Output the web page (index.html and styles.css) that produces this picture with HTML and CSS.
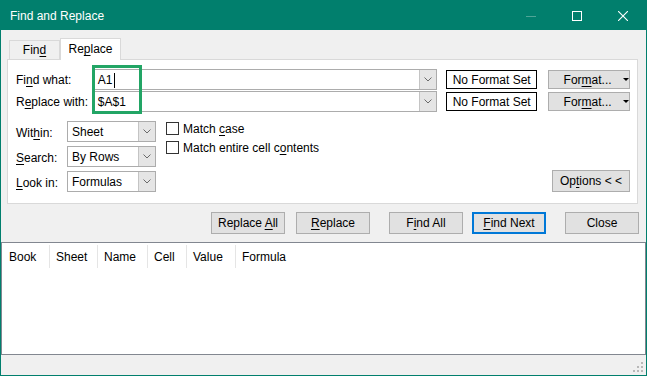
FILE: index.html
```html
<!DOCTYPE html>
<html lang="en">
<head>
  <meta charset="UTF-8">
  <title>Find and Replace</title>
  <link rel="stylesheet" href="styles.css">
</head>
<body>
  <div class="window">
    <div class="titlebar">
      <span class="title">Find and Replace</span>
      <div class="controls">
        <div class="ctl"><svg width="10" height="10"><path d="M0 5.5 H10" stroke="#4fa597"/></svg></div>
        <div class="ctl"><svg width="10" height="10"><rect x="0.5" y="0.5" width="9" height="9" fill="none" stroke="#fff"/></svg></div>
        <div class="ctl"><svg width="10" height="10"><path d="M0 0 L10 10 M10 0 L0 10" stroke="#fff" stroke-width="1.1"/></svg></div>
      </div>
    </div>

    <div class="main">
      <div class="tabs">
        <div class="tab">Fin<u>d</u></div>
        <div class="tab active">Re<u>p</u>lace</div>
      </div>

      <div class="panel">
        <div class="row">
          <label class="row-label">Fi<u>n</u>d what:</label>
          <div class="combo wide">
            <div class="combo-text">A1<span class="caret"></span></div>
            <div class="combo-arrow"><svg width="8" height="5"><path d="M0.5 0.5 L4 4 L7.5 0.5" fill="none" stroke="#6a6a6a"/></svg></div>
          </div>
          <div class="nofmt">No Format Set</div>
          <div class="btn fmt"><span>For<u>m</u>at...</span><span class="tri"></span></div>
        </div>
        <div class="row">
          <label class="row-label">R<u>e</u>place with:</label>
          <div class="combo wide">
            <div class="combo-text">$A$1</div>
            <div class="combo-arrow"><svg width="8" height="5"><path d="M0.5 0.5 L4 4 L7.5 0.5" fill="none" stroke="#6a6a6a"/></svg></div>
          </div>
          <div class="nofmt">No Format Set</div>
          <div class="btn fmt"><span>For<u>m</u>at...</span><span class="tri"></span></div>
        </div>

        <div class="lower">
          <div class="selects">
            <div class="sel-row">
              <label class="sel-label">Wit<u>h</u>in:</label>
              <div class="combo small">
                <div class="combo-text">Sheet</div>
                <div class="combo-arrow"><svg width="8" height="5"><path d="M0.5 0.5 L4 4 L7.5 0.5" fill="none" stroke="#6a6a6a"/></svg></div>
              </div>
            </div>
            <div class="sel-row">
              <label class="sel-label"><u>S</u>earch:</label>
              <div class="combo small">
                <div class="combo-text">By Rows</div>
                <div class="combo-arrow"><svg width="8" height="5"><path d="M0.5 0.5 L4 4 L7.5 0.5" fill="none" stroke="#6a6a6a"/></svg></div>
              </div>
            </div>
            <div class="sel-row">
              <label class="sel-label"><u>L</u>ook in:</label>
              <div class="combo small">
                <div class="combo-text">Formulas</div>
                <div class="combo-arrow"><svg width="8" height="5"><path d="M0.5 0.5 L4 4 L7.5 0.5" fill="none" stroke="#6a6a6a"/></svg></div>
              </div>
            </div>
          </div>

          <div class="checks">
            <div class="check"><span class="box"></span><span>Match <u>c</u>ase</span></div>
            <div class="check"><span class="box"></span><span>Match entire cell c<u>o</u>ntents</span></div>
          </div>

          <div class="btn options">Op<u>t</u>ions &lt; &lt;</div>
        </div>
      </div>

      <div class="actions">
        <div class="btn act">Replace <u>A</u>ll</div>
        <div class="btn act gap-s"><u>R</u>eplace</div>
        <div class="btn act gap-l">F<u>i</u>nd All</div>
        <div class="btn act gap-s primary"><u>F</u>ind Next</div>
        <div class="btn act gap-l">Close</div>
      </div>
    </div>

    <div class="results">
      <div class="res-head">
        <div class="col c-book">Book</div>
        <div class="col c-sheet">Sheet</div>
        <div class="col c-name">Name</div>
        <div class="col c-cell">Cell</div>
        <div class="col c-value">Value</div>
        <div class="col c-formula">Formula</div>
      </div>
    </div>

    <div class="statusbar">
      <svg class="grip" width="11" height="11">
        <rect x="8" y="0" width="2" height="2" fill="#b8b8b8"/>
        <rect x="4" y="4" width="2" height="2" fill="#b8b8b8"/>
        <rect x="8" y="4" width="2" height="2" fill="#b8b8b8"/>
        <rect x="0" y="8" width="2" height="2" fill="#b8b8b8"/>
        <rect x="4" y="8" width="2" height="2" fill="#b8b8b8"/>
        <rect x="8" y="8" width="2" height="2" fill="#b8b8b8"/>
      </svg>
    </div>

    <!-- highlight round the two search values -->
    <div class="highlight"></div>
  </div>
</body>
</html>
```

FILE: styles.css
```css
body {
  margin: 0;
  font-family: "Liberation Sans", Arial, sans-serif;
  font-size: 12px;
  color: #000;
}

u {
  text-decoration-thickness: 1px;
  text-underline-offset: 2px;
}

.window {
  position: relative;
  width: 647px;
  height: 376px;
  box-sizing: border-box;
  border: 1px solid #017f6d;
  border-top: 0;
  background: #f0f0f0;
  display: flex;
  flex-direction: column;
}

.titlebar {
  height: 30px;
  flex: none;
  background: #017f6d;
  color: #fff;
  display: flex;
  align-items: center;
  padding-left: 9px;
  padding-top: 1px;
  box-sizing: border-box;
}

.controls {
  margin-left: auto;
  display: flex;
}

.ctl {
  width: 46px;
  height: 29px;
  display: flex;
  align-items: center;
  justify-content: center;
}

.main {
  padding-top: 8px;
}

.tabs {
  display: flex;
  align-items: flex-end;
  height: 21px;
  padding-left: 8px;
}

.tab {
  width: 51px;
  height: 19px;
  box-sizing: border-box;
  border: 1px solid #d9d9d9;
  border-bottom: 0;
  text-align: center;
  line-height: 19px;
}

.tab.active {
  width: 61px;
  height: 22px;
  margin-bottom: -1px;
  background: #fff;
  line-height: 20px;
  position: relative;
  z-index: 1;
}

.panel {
  margin-left: 6px;
  width: 631px;
  height: 145px;
  box-sizing: border-box;
  border: 1px solid #d9d9d9;
  background: #fff;
  padding: 9px 7px 0 8px;
}

.row {
  display: flex;
  align-items: center;
  height: 21px;
  margin-bottom: 1px;
}

.row-label {
  width: 77px;
  padding-top: 1px;
}

.combo {
  display: flex;
  height: 21px;
  box-sizing: border-box;
  border: 1px solid #acacac;
  background: #fff;
}

.combo.wide {
  width: 345px;
}

.combo.small {
  width: 89px;
}

.combo-text {
  flex: 1;
  padding-left: 4px;
  padding-top: 1px;
  display: flex;
  align-items: center;
}

.caret {
  display: inline-block;
  width: 1px;
  height: 15px;
  background: #000;
  margin-left: 1px;
}

.combo-arrow {
  width: 16px;
  border-left: 1px solid #c4c4c4;
  background: #e5e5e5;
  display: flex;
  align-items: center;
  justify-content: center;
}

.nofmt {
  width: 91px;
  height: 19px;
  box-sizing: border-box;
  margin-left: 9px;
  border: 1px solid #000;
  text-align: center;
  line-height: 18px;
}

.btn {
  box-sizing: border-box;
  border: 1px solid #adadad;
  background: #e1e1e1;
  text-align: center;
}

.fmt {
  width: 82px;
  height: 19px;
  margin-left: 11px;
  padding-left: 14px;
  display: flex;
  align-items: center;
  justify-content: center;
}

.tri {
  width: 0;
  height: 0;
  border-left: 3px solid transparent;
  border-right: 3px solid transparent;
  border-top: 3px solid #000;
  margin-left: 11px;
}

.lower {
  display: flex;
  margin-top: 9px;
}

.selects {
  display: flex;
  flex-direction: column;
  gap: 4px;
}

.sel-row {
  display: flex;
  align-items: center;
}

.sel-label {
  width: 51px;
  padding-top: 2px;
}

.checks {
  margin-left: 10px;
  display: flex;
  flex-direction: column;
  gap: 6px;
  padding-top: 1px;
}

.check {
  display: flex;
  align-items: center;
  height: 13px;
}

.box {
  width: 13px;
  height: 13px;
  box-sizing: border-box;
  border: 1px solid #333;
  background: #fff;
  margin-right: 4px;
}

.options {
  margin-left: auto;
  align-self: flex-end;
  width: 78px;
  height: 22px;
  line-height: 21px;
}

.actions {
  display: flex;
  margin-top: 8px;
  padding-left: 210px;
}

.act {
  width: 74px;
  height: 22px;
  line-height: 21px;
}

.gap-s {
  margin-left: 11px;
}

.gap-l {
  margin-left: 19px;
}

.act.primary {
  margin-left: 9px;
  border: 2px solid #0078d7;
  line-height: 19px;
}

.results {
  margin-top: 8px;
  height: 113px;
  flex: none;
  box-sizing: border-box;
  border: 1px solid #828790;
  background: #fff;
}

.res-head {
  display: flex;
  margin-top: 2px;
  height: 23px;
}

.col {
  box-sizing: border-box;
  border-right: 1px solid #e5e5e5;
  padding-left: 6px;
  line-height: 24px;
}

.c-book { width: 48px; padding-left: 7px; }
.c-sheet { width: 48px; }
.c-name { width: 50px; }
.c-cell { width: 39px; }
.c-value { width: 49px; }
.c-formula { border-right: 0; }

.statusbar {
  flex: 1;
  display: flex;
  justify-content: flex-end;
  align-items: flex-end;
  padding: 0 2px 2px 0;
}

.highlight {
  position: absolute;
  left: 91px;
  top: 65px;
  width: 50px;
  height: 49px;
  box-sizing: border-box;
  border: 3px solid #22a565;
}
```
